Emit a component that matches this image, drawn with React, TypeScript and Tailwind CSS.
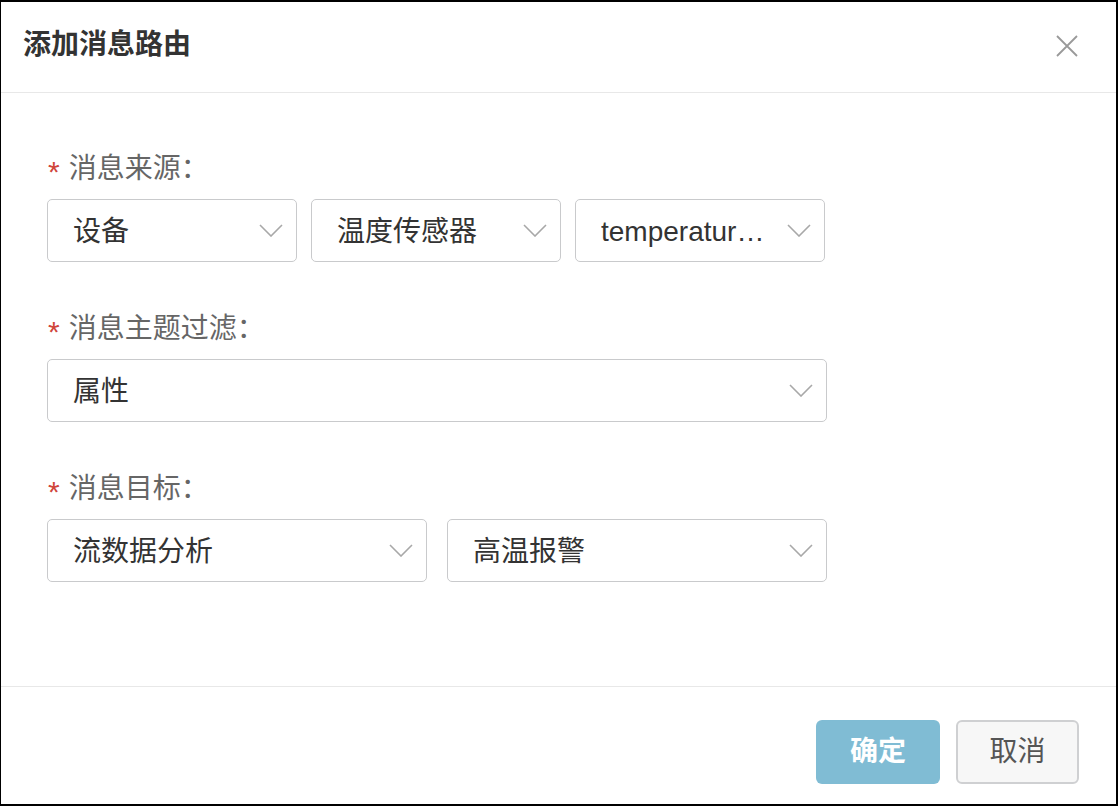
const FONT = { fontFamily: '"Liberation Sans", "Noto Sans CJK SC", sans-serif' };

function Chevron() {
  return (
    <svg width="24" height="13" viewBox="0 0 24 13" fill="none" className="shrink-0">
      <path d="M1 1 L12 12 L23 1" stroke="#a8a8a8" strokeWidth="1.6" />
    </svg>
  );
}

function Select({ value, width }: { value: string; width: string }) {
  return (
    <div
      className={`${width} h-[63px] flex items-center gap-4 pl-[25px] pr-[13px] bg-white border border-[#c9cacc] rounded-[5px]`}
    >
      <span className="flex-1 min-w-0 truncate text-[28px] leading-[1.3] text-[#333] pt-[3px]">{value}</span>
      <Chevron />
    </div>
  );
}

function Field({ label, children, last }: { label: string; children: React.ReactNode; last?: boolean }) {
  return (
    <div className={`flex flex-col ${last ? "" : "mb-[48px]"}`}>
      <div className="h-8 flex items-center mt-[3px] mb-[14px]">
        <span className="text-[30px] leading-none text-[#d0453a] mr-[9px] mt-[6px] ml-[1px]">*</span>
        <span className="text-[28px] leading-[1.2] text-[#666]">{label}：</span>
      </div>
      <div className="flex">{children}</div>
    </div>
  );
}

export default function App() {
  return (
    <div
      style={FONT}
      className="w-[1118px] h-[806px] flex flex-col bg-white border-black border-l border-t-2 border-r-2 border-b-2"
    >
      {/* header */}
      <div className="h-[91px] shrink-0 flex items-center justify-between pl-[22px] pr-[38px] pb-[4px] border-b border-[#e8e8e8]">
        <h1 className="text-[28px] leading-[1.2] font-bold text-[#333]">添加消息路由</h1>
        <svg width="22" height="22" viewBox="0 0 22 22" className="mt-[2px]">
          <path d="M1 1 L21 21 M21 1 L1 21" stroke="#999" strokeWidth="1.8" />
        </svg>
      </div>

      {/* body */}
      <div className="flex-1 px-[46px] pt-[57px]">
        <Field label="消息来源">
          <div className="flex gap-[14px]">
            <Select value="设备" width="w-[250px]" />
            <Select value="温度传感器" width="w-[250px]" />
            <Select value="temperature_sensor" width="w-[250px]" />
          </div>
        </Field>
        <Field label="消息主题过滤">
          <Select value="属性" width="w-[780px]" />
        </Field>
        <Field label="消息目标" last>
          <div className="flex gap-[20px]">
            <Select value="流数据分析" width="w-[380px]" />
            <Select value="高温报警" width="w-[380px]" />
          </div>
        </Field>
      </div>

      {/* footer */}
      <div className="h-[118px] shrink-0 flex items-start justify-end gap-4 pt-[33px] pr-[37px] border-t border-[#e8e8e8]">
        <button className="w-[124px] h-[64px] rounded-[6px] bg-[#80bcd4] text-white text-[28px] font-bold leading-[1.2]">
          确定
        </button>
        <button className="w-[123px] h-[64px] rounded-[6px] bg-[#f7f7f7] border-2 border-[#cfd0d2] text-[#555] text-[28px] leading-[1.2]">
          取消
        </button>
      </div>
    </div>
  );
}
